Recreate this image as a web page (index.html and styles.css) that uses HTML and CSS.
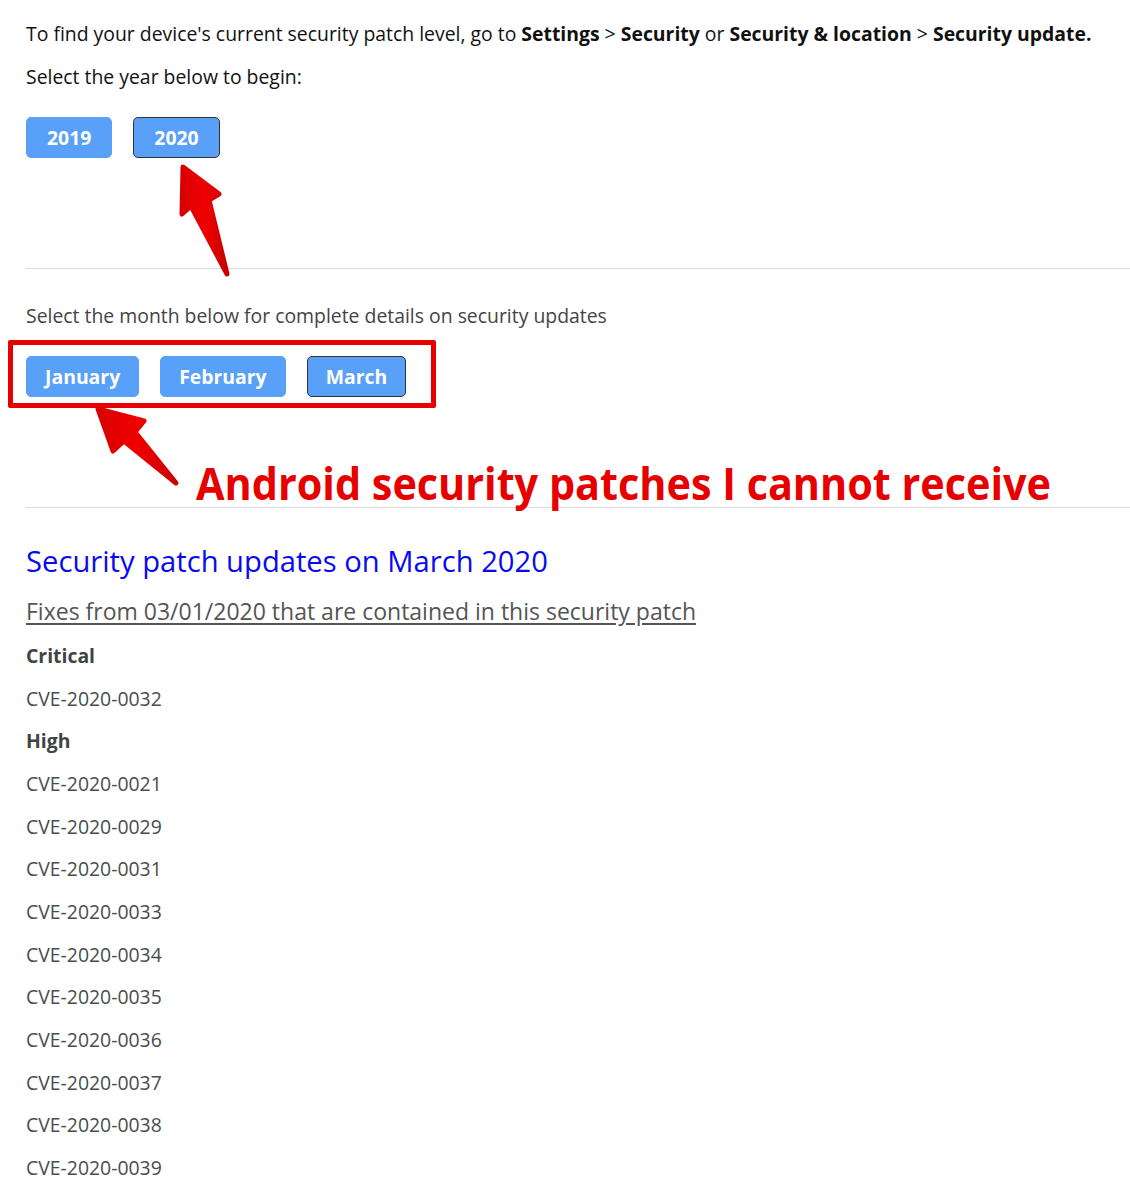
FILE: index.html
```html
<!DOCTYPE html>
<html>
<head>
<meta charset="utf-8">
<link rel="stylesheet" href="styles.css">
</head>
<body>
<div class="page">
  <p class="intro">To find your device's current security patch level, go to <b>Settings</b> &gt; <b>Security</b> or <b>Security &amp; location</b> &gt; <b>Security update.</b></p>
  <p class="intro second">Select the year below to begin:</p>
  <div class="btns">
    <button class="btn year">2019</button>
    <button class="btn year active">2020</button>
  </div>
  <hr class="rule">
  <p class="hint">Select the month below for complete details on security updates</p>
  <div class="btns">
    <button class="btn">January</button>
    <button class="btn">February</button>
    <button class="btn active">March</button>
  </div>
  <hr class="rule">
  <h2 class="title">Security patch updates on March 2020</h2>
  <a class="fixes">Fixes from 03/01/2020 that are contained in this security patch</a>
  <ul class="list">
    <li class="sev">Critical</li>
    <li>CVE-2020-0032</li>
    <li class="sev">High</li>
    <li>CVE-2020-0021</li>
    <li>CVE-2020-0029</li>
    <li>CVE-2020-0031</li>
    <li>CVE-2020-0033</li>
    <li>CVE-2020-0034</li>
    <li>CVE-2020-0035</li>
    <li>CVE-2020-0036</li>
    <li>CVE-2020-0037</li>
    <li>CVE-2020-0038</li>
    <li>CVE-2020-0039</li>
  </ul>
</div>
<div class="redbox"></div>
<div class="note">Android security patches I cannot receive</div>
<svg class="arrows" width="1130" height="1200" viewBox="0 0 1130 1200">
  <defs>
    <linearGradient id="rg" x1="0" y1="0" x2="1" y2="0">
      <stop offset="0" stop-color="#d80000"/>
      <stop offset="0.5" stop-color="#f00000"/>
      <stop offset="1" stop-color="#c80000"/>
    </linearGradient>
  </defs>
  <path d="M183 167 L219 194 L209 200 L227 274 L191 206 L182 214 Z" fill="url(#rg)" stroke="url(#rg)" stroke-width="5" stroke-linejoin="round"/>
  <path d="M98 409 L144 421 L135 432 L176 483 L124 441 L113 451 Z" fill="url(#rg)" stroke="url(#rg)" stroke-width="5" stroke-linejoin="round"/>
</svg>
</body>
</html>
```

FILE: styles.css
```css
html, body {
  margin: 0;
  padding: 0;
  background: #fff;
}
body {
  font-family: "Open Sans", "Noto Sans", sans-serif;
  color: #111;
  position: relative;
  width: 1130px;
  min-height: 1200px;
  overflow: hidden;
}
.page {
  padding: 21px 0 0 26px;
}
.intro {
  margin: 0;
  font-size: 19.4px;
  line-height: 26px;
  color: #111;
}
.intro b {
  font-weight: 700;
}
.second {
  margin-top: 17px;
}
.btns {
  display: flex;
  gap: 21px;
  margin-top: 27px;
}
.btn {
  font-family: "Open Sans", sans-serif;
  font-weight: 700;
  font-size: 19.4px;
  color: #fff;
  background: #58a0f8;
  border: 1px solid #58a0f8;
  border-radius: 5px;
  height: 41px;
  padding: 0 18px;
  line-height: 39px;
}
.btn.year {
  padding: 0 20px;
}
.btn.active {
  border-color: #333;
}
.rule {
  border: 0;
  border-top: 1px solid #dcdcdc;
  margin: 110px 0 0;
  height: 0;
}
.hint {
  margin: 34px 0 0;
  font-size: 19.4px;
  line-height: 26px;
  color: #444;
}
.title {
  margin: 34px 0 0;
  font-size: 29.2px;
  line-height: 38px;
  font-weight: 400;
  color: #0a0af0;
}
.fixes {
  display: block;
  margin-top: 16px;
  font-size: 23px;
  line-height: 30px;
  color: #555;
  text-decoration: underline;
  text-underline-offset: 3px;
}
.list {
  list-style: none;
  margin: 17px 0 0;
  padding: 0;
  display: flex;
  flex-direction: column;
  gap: 16.667px;
}
.list li {
  font-size: 19.4px;
  line-height: 26px;
  color: #4a4d4d;
}
.list .sev {
  font-weight: 700;
  color: #3f4444;
}
.redbox {
  position: absolute;
  left: 8px;
  top: 340px;
  width: 418px;
  height: 58px;
  border: 5px solid #e60000;
  border-radius: 2px;
}
.note {
  position: absolute;
  left: 196px;
  top: 455px;
  font-size: 44px;
  line-height: 56px;
  font-weight: 700;
  color: #e60000;
  white-space: nowrap;
  transform: scaleX(0.94);
  transform-origin: left center;
}
.arrows {
  position: absolute;
  left: 0;
  top: 0;
  pointer-events: none;
}
```
